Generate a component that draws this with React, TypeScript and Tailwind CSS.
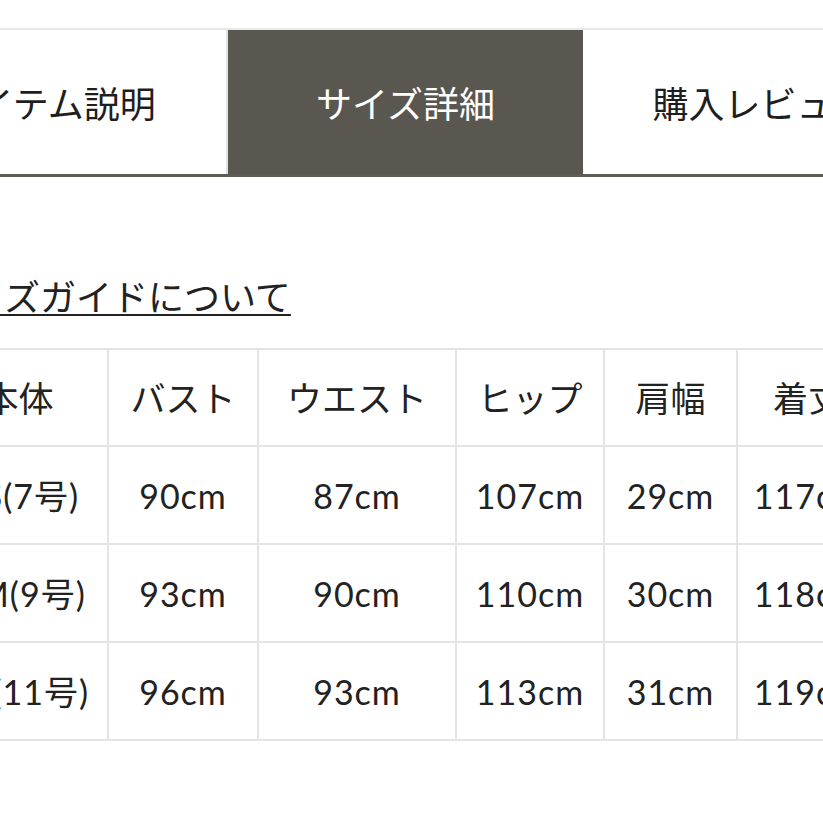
import React from "react";

const FONT = { fontFamily: "Lato, 'Noto Sans CJK JP', sans-serif" };
const JP = { fontFamily: "'Noto Sans CJK JP', sans-serif" };

const header = ["本体", "バスト", "ウエスト", "ヒップ", "肩幅", "着丈"];
const rows = [
  ["S(7号)", "90cm", "87cm", "107cm", "29cm", "117cm"],
  ["M(9号)", "93cm", "90cm", "110cm", "30cm", "118cm"],
  ["L(11号)", "96cm", "93cm", "113cm", "31cm", "119cm"],
];

export default function App() {
  return (
    <div className="w-[823px] h-[823px] overflow-hidden bg-white text-[#222]" style={FONT}>
      <div className="pt-[28px]">
        <div className="flex ml-[-127px] w-[1100px] border-t-2 border-[#e8e8e8] border-b-[3px] border-b-[#5f5b55]">
          <div className="w-[355px] h-[144px] shrink-0 flex items-center justify-center border-r-2 border-[#e2e2e2] text-[36px] text-[#1e1e1e]" style={JP}>
            アイテム説明
          </div>
          <div className="w-[355px] h-[144px] shrink-0 flex items-center justify-center bg-[#5a5650] text-[36px] text-white" style={JP}>
            サイズ詳細
          </div>
          <div className="w-[355px] h-[144px] shrink-0 flex items-center justify-center text-[36px] text-[#1e1e1e]" style={JP}>
            購入レビュー
          </div>
        </div>
      </div>

      <div className="mt-[100px] ml-[-67px] leading-[36px]">
        <span className="text-[36px] underline decoration-2 underline-offset-[3px] text-[#222]" style={JP}>
          サイズガイドについて
        </span>
      </div>

      <div className="mt-[25px] ml-[-46px] w-[1000px]">
        <div className="inline-grid grid-cols-[151px_148px_196px_146px_131px_140px] gap-[2px] p-[2px] bg-[#e4e4e4]">
          {header.map((h, i) => (
            <div
              key={"h" + i}
              className={
                "bg-white h-[95px] flex items-center justify-center text-[35px]" +
                (i === 0 ? " pr-[26px]" : "")
              }
              style={JP}
            >
              {h}
            </div>
          ))}
          {rows.map((r, ri) =>
            r.map((c, ci) => (
              <div key={ri + "-" + ci} className="bg-white h-[96px] flex items-center justify-center text-[34px] tracking-[1px]">
                {c}
              </div>
            ))
          )}
        </div>
      </div>
    </div>
  );
}
